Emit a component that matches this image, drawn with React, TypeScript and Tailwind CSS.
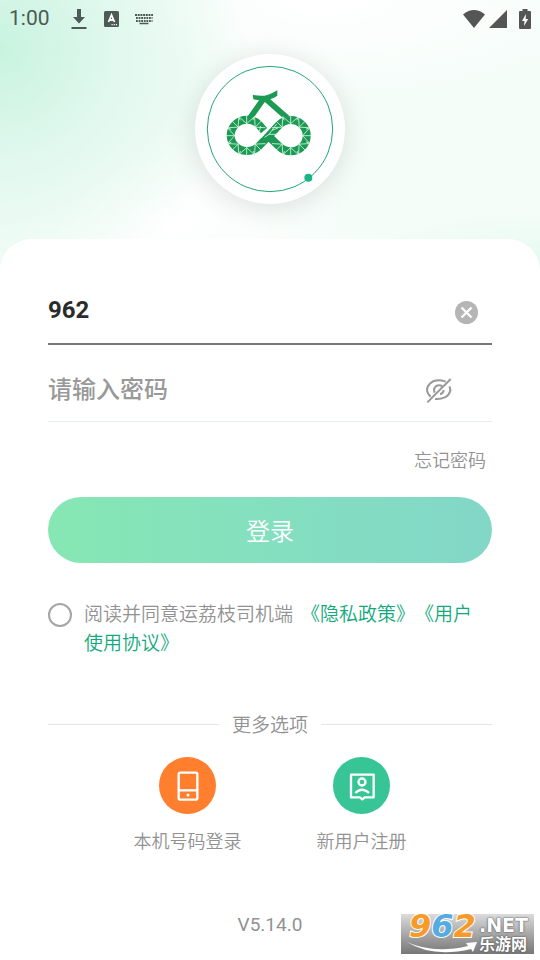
import React, { useState } from 'react';

const LOOPS = [
  { cx: 170, cy: 257, from: 45, to: 315 },
  { cx: 302, cy: 257, from: -135, to: 135 },
];

const point = (cx: number, cy: number, r: number, deg: number) => {
  const a = (deg * Math.PI) / 180;
  return `${(cx + r * Math.cos(a)).toFixed(1)} ${(cy + r * Math.sin(a)).toFixed(1)}`;
};

// white facet lines on the lychee skin
const facets = LOOPS.map(({ cx, cy, from, to }) => {
  let d = '';
  for (let deg = from; deg <= to; deg += 45) {
    d += `M${point(cx, cy, 34, deg)}L${point(cx, cy, 63, deg)}`;
    d += `M${point(cx, cy, 61, deg - 22)}L${point(cx, cy, 36, deg)}L${point(cx, cy, 61, deg + 22)}`;
    if (deg < to) {
      d += `M${point(cx, cy, 50, deg + 22)}L${point(cx, cy, 62, deg + 22)}`;
    }
  }
  return d;
}).join('');

const Logo: React.FC = () => (
  <svg viewBox="15 12 450 450" className="size-full" fill="none" aria-hidden="true">
    <circle cx="240" cy="237" r="188" stroke="#22a67c" strokeWidth="3" />
    <circle cx="355" cy="383" r="12" fill="#1bb487" />
    <g stroke="#1c9a54">
      <path d="M220 147L180 204M226 146L292 204" strokeWidth="17" />
      <path d="M222 242L207 224A49 47 0 1 0 205 290L268 224A48 47 0 1 1 268 290L237 260" strokeWidth="24" />
    </g>
    <path d="M188 134Q224 143 248 128L262 121L262 137Q246 149 224 150Q205 151 190 148Z" fill="#1c9a54" />
    <path d={facets} stroke="#d5f5e2" strokeWidth="2.500" />
    <path d="M224 262L237 253L264 253M237 253L260 222M212 228L208 244M246 241L264 234" stroke="#d5f5e2" strokeWidth="2.500" />
    <path d="M212 262L246 224" stroke="#fff" strokeWidth="6" />
  </svg>
);

const StatusBar: React.FC = () => (
  <div className="flex h-[37px] items-center justify-between px-[9px] text-[#4d5a55]">
    <div className="flex items-center">
      <span className="w-[61px] text-[21px]">1:00</span>
      <svg viewBox="0 0 18 22" className="mr-4 h-[22px] w-[18px]" fill="currentColor" aria-hidden="true">
        <path d="M7 1h4v8h4l-6 6.500-6-6.500h4zM1.500 19h15v2h-15z" />
      </svg>
      <svg viewBox="0 0 16 16" className="mr-3.5 size-4" aria-hidden="true">
        <rect width="15" height="16" rx="1.500" fill="currentColor" />
        <path d="M4.500 11L7.500 4l3 7M5.500 9h4" fill="none" stroke="#fff" strokeWidth="1.800" />
        <path d="M7.500 13.700h1.200M9.700 13.700h1.200M11.900 13.700h1.200" stroke="#fff" strokeWidth="1.200" />
      </svg>
      <svg viewBox="0 0 20 12" className="h-3 w-5" stroke="currentColor" strokeWidth="2" aria-hidden="true">
        <path d="M1 2h18" strokeDasharray="2 .7" />
        <path d="M2 5h16.500M2 8h16.500" strokeDasharray="1.800 .8" />
        <path d="M5.500 10.500h9" strokeWidth="1.500" />
      </svg>
    </div>
    <div className="flex items-center">
      <svg viewBox="0 0 22 18" className="mr-1 h-[18px] w-[22px]" fill="#555" aria-hidden="true">
        <path d="M0 4.500Q11-4.300 22 4.500L11 18z" />
      </svg>
      <svg viewBox="0 0 18 18" className="mr-3 size-[18px]" fill="#555" aria-hidden="true">
        <path d="M18 0v18H0z" />
      </svg>
      <svg viewBox="0 0 12 20" className="h-5 w-3" aria-hidden="true">
        <path d="M3.500 0h5v2H11a1 1 0 0 1 1 1v16a1 1 0 0 1-1 1H1a1 1 0 0 1-1-1V3a1 1 0 0 1 1-1h2.500z" fill="#555" />
        <path d="M7 5L3 12h2.500L5 17l4.200-7H6.700z" fill="#fff" />
      </svg>
    </div>
  </div>
);

const EyeOffIcon: React.FC = () => (
  <svg viewBox="75 295 84 84" className="size-7" fill="none" stroke="#999" strokeWidth="6" aria-hidden="true">
    <path d="M82 371L152 301" />
    <path d="M137 309Q126 305 115 305C94 305 81 320 81 334Q82 346 92 354" />
    <path d="M148 323Q153 333 150 339C145 354 128 363 105 361" />
    <path d="M104 342C98 329 107 320 117 320Q123 320 127 323M131 334Q130 345 120 347" />
  </svg>
);

const PhoneIcon: React.FC = () => (
  <svg viewBox="157 211 90 90" className="size-[30px]" fill="none" stroke="#fff" strokeWidth="7" aria-hidden="true">
    <rect x="174" y="216" width="56" height="81" rx="5" />
    <path d="M174 269h56" />
    <circle cx="202" cy="283" r="4.500" fill="#fff" stroke="none" />
  </svg>
);

const PersonIcon: React.FC = () => (
  <svg viewBox="681 211 90 90" className="size-[30px]" fill="none" stroke="#fff" strokeWidth="7" strokeLinejoin="round" aria-hidden="true">
    <path d="M693 222h68v68h-27l-7 6-7-6h-27z" />
    <circle cx="726" cy="244" r="10.500" />
    <path d="M706 277Q726 257 747 277" />
  </svg>
);

const SiteBadge: React.FC = () => (
  <div className="absolute bottom-1.5 right-1.5 h-10 w-[133px] bg-linear-to-b from-[#dcdcdc] to-[#777]">
    <svg viewBox="0 0 133 40" className="absolute inset-0 size-full" aria-hidden="true">
      <path d="M6 28Q32 40 67 32L65 29L76 28L72 38L70 35Q32 44 6 28Z" fill="#fff" />
    </svg>
    <div className="relative flex h-full">
      <div className="w-[78px] pl-2 font-['DejaVu_Sans'] text-[32px] font-bold italic leading-6 [-webkit-text-stroke:2px_#fff] [paint-order:stroke_fill]">
        <span className="text-[#f79a2a]">9</span>
        <span className="text-[#56abe2]">6</span>
        <span className="text-[#f79a2a]">2</span>
      </div>
      <div className="flex flex-col font-bold text-white [text-shadow:0_0_2px_#555,0_0_1px_#555]">
        <span className="font-['DejaVu_Sans'] text-[19px] leading-[22px]">.NET</span>
        <span className="text-base leading-[18px]">乐游网</span>
      </div>
    </div>
  </div>
);

const App: React.FC = () => {
  const [account, setAccount] = useState('962');
  const [password, setPassword] = useState('');
  const [showPassword, setShowPassword] = useState(false);
  const [agreed, setAgreed] = useState(false);

  return (
    <main className="relative flex min-h-screen flex-col bg-[#f5fdf9] bg-[radial-gradient(ellipse_250px_240px_at_0px_50px,#c8f3df_0%,#e0f8ed_45%,transparent_100%),radial-gradient(ellipse_200px_60px_at_100%_270px,#e3f9ee_0%,transparent_100%),radial-gradient(ellipse_180px_100px_at_32%_220px,#ffffff_0%,transparent_100%),radial-gradient(ellipse_300px_100px_at_60%_0px,#ffffff_0%,transparent_100%)] font-[Roboto,'Noto_Sans_CJK_SC',sans-serif] text-[#929292]">
      <StatusBar />

      <header className="flex justify-center pb-[35px] pt-[17px]">
        <div className="size-[150px] rounded-full bg-white shadow-[0_4px_28px_rgba(0,0,0,0.12)]">
          <Logo />
        </div>
      </header>

      <section className="flex-1 rounded-t-[32px] bg-white px-12 pb-5 pt-[42px]">
        <form onSubmit={e => e.preventDefault()}>
          <div className="flex h-16 items-center border-b-2 border-[#777]">
            <input
              type="text"
              aria-label="账号"
              value={account}
              onChange={e => setAccount(e.target.value)}
              className="min-w-0 flex-1 pb-1 text-2xl font-bold text-[#2b2b2b] outline-none"
            />
            <button type="button" aria-label="清除" onClick={() => setAccount('')} className="mr-3.5">
              <svg viewBox="0 0 23 23" className="size-[23px]" aria-hidden="true">
                <circle cx="11.500" cy="11.500" r="11.500" fill="#b5b5b5" />
                <path d="M6.500 6.500l10 10M16.500 6.500l-10 10" stroke="#fff" strokeWidth="2.400" />
              </svg>
            </button>
          </div>

          <div className="mt-[15px] flex h-[62px] items-center border-b border-[#e6ecec]">
            <input
              type={showPassword ? 'text' : 'password'}
              aria-label="密码"
              placeholder="请输入密码"
              value={password}
              onChange={e => setPassword(e.target.value)}
              className="min-w-0 flex-1 pb-0.5 text-2xl font-medium text-[#2b2b2b] outline-none placeholder:text-[#999]"
            />
            <button type="button" aria-label="显示密码" onClick={() => setShowPassword(!showPassword)} className="mr-[39px]">
              <EyeOffIcon />
            </button>
          </div>

          <div className="mt-[25px] flex justify-end pr-1.5 text-lg font-[350]">
            <a href="#forgot">忘记密码</a>
          </div>

          <button type="submit" className="mt-[22px] h-[66px] w-full rounded-full bg-linear-to-r from-[#86e7b3] via-[#84dfbf] to-[#82d7c7] pt-1 text-2xl font-[350] text-white">
            登录
          </button>

          <div className="mt-[37px] flex items-start gap-3">
            <input
              id="agree"
              type="checkbox"
              checked={agreed}
              onChange={e => setAgreed(e.target.checked)}
              className="mt-[3px] size-6 shrink-0 appearance-none rounded-full border-2 border-[#a5a5a5] checked:bg-[#1bb487]"
            />
            <p className="text-[19px] font-[350] leading-[29px] [text-spacing-trim:space-all]">
              <label htmlFor="agree" className="mr-2">阅读并同意运荔枝司机端</label>
              <span className="text-[#12a97c]">
                <a href="#privacy">《隐私政策》</a><a href="#terms">《用户<br />使用协议》</a>
              </span>
            </p>
          </div>
        </form>

        <div className="mt-[50px] flex items-center gap-[13px]">
          <hr className="flex-1 border-[#e5e5e5]" />
          <h2 className="pt-1 text-[19px] font-[350] leading-7">更多选项</h2>
          <hr className="flex-1 border-[#e5e5e5]" />
        </div>

        <div className="mt-[17px] flex justify-center gap-[75px] text-lg font-[350]">
          <button type="button" className="flex flex-col items-center gap-3.5">
            <span className="flex size-[57px] items-center justify-center rounded-full bg-[#ff7f2e]">
              <PhoneIcon />
            </span>
            本机号码登录
          </button>
          <button type="button" className="flex flex-col items-center gap-3.5">
            <span className="flex size-[57px] items-center justify-center rounded-full bg-[#37c596]">
              <PersonIcon />
            </span>
            新用户注册
          </button>
        </div>

        <p className="mt-[55px] text-center text-[19px] leading-7">V5.14.0</p>
      </section>

      <SiteBadge />
    </main>
  );
};

export default App;
